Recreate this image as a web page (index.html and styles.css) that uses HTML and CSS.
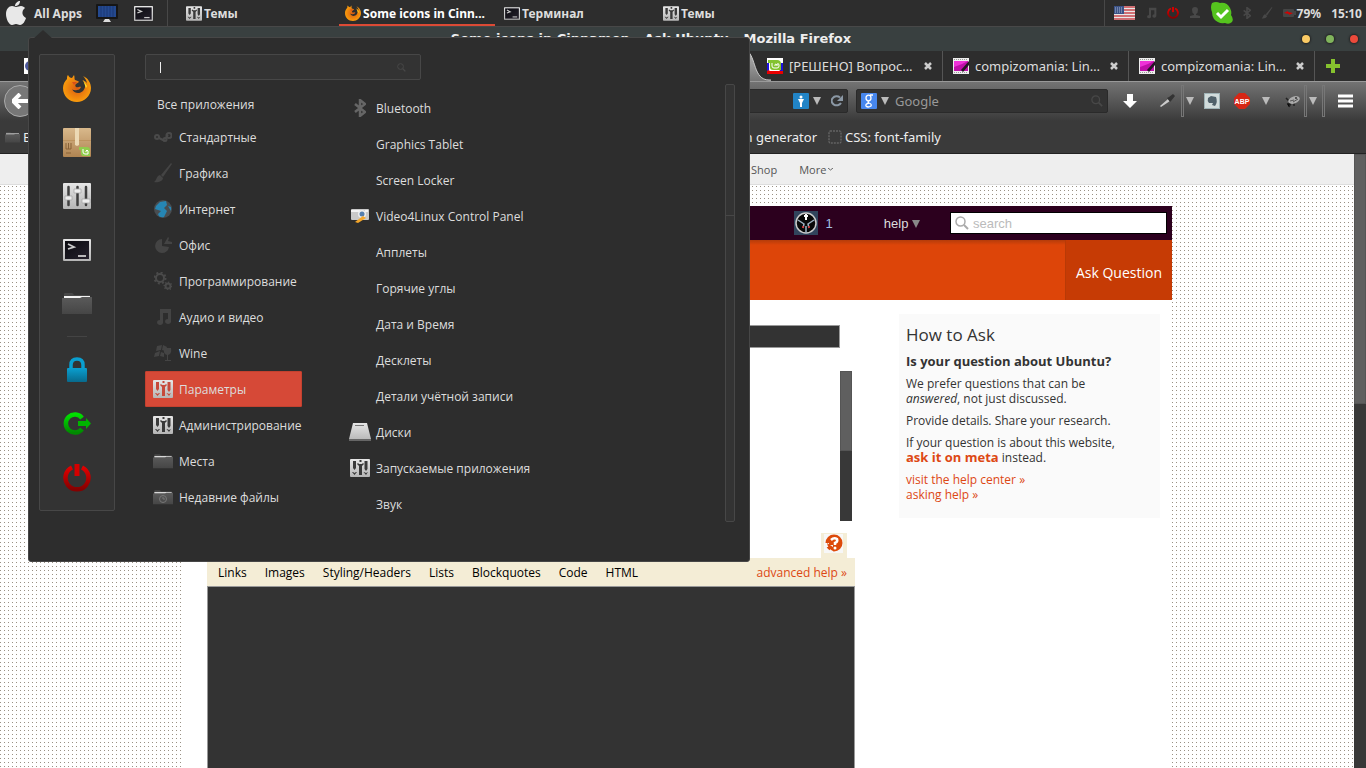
FILE: index.html
```
<!DOCTYPE html>
<html lang="ru">
<head>
<meta charset="UTF-8">
<meta name="viewport" content="width=device-width, initial-scale=1.0">
<title>Some icons in Cinnamon - Ask Ubuntu</title>
<link rel="stylesheet" href="styles.css">
</head>
<body>

<!-- Shared icons -->
<svg class="sprite" aria-hidden="true">
    <defs>
        <linearGradient id="gSilver" x1="0" y1="0" x2="0" y2="1"><stop offset="0" stop-color="#e6e6e6"/><stop offset="1" stop-color="#b5b5b5"/></linearGradient>
        <linearGradient id="gFolder" x1="0" y1="0" x2="0" y2="1"><stop offset="0" stop-color="#5a5a5a"/><stop offset="1" stop-color="#464646"/></linearGradient>
        <linearGradient id="gScreen" x1="0" y1="0" x2="1" y2="1"><stop offset="0" stop-color="#0b0b10"/><stop offset="1" stop-color="#25212c"/></linearGradient>
        <linearGradient id="gRed" x1="0" y1="0" x2="0" y2="1"><stop offset="0" stop-color="#e00000"/><stop offset="1" stop-color="#850000"/></linearGradient>
        <linearGradient id="gGreen" x1="0" y1="0" x2="0" y2="1"><stop offset="0" stop-color="#00e000"/><stop offset="1" stop-color="#008a00"/></linearGradient>
        <linearGradient id="gBlue" x1="0" y1="0" x2="0" y2="1"><stop offset="0" stop-color="#0a9fd0"/><stop offset="1" stop-color="#086a8c"/></linearGradient>
        <linearGradient id="gBox" x1="0" y1="0" x2="0" y2="1"><stop offset="0" stop-color="#d9b98c"/><stop offset="1" stop-color="#b08452"/></linearGradient>
        <linearGradient id="gTab" x1="0" y1="0" x2="0" y2="1"><stop offset="0" stop-color="#b4b4b4"/><stop offset="1" stop-color="#757575"/></linearGradient>
        <radialGradient id="gFox"><stop offset="0" stop-color="#d95b12"/><stop offset="1" stop-color="#f99b0c"/></radialGradient>
    </defs>
    <symbol id="firefox" viewBox="0 0 28 28">
        <path d="M5 1C6 3 7 4 9 4L11 1C12 3 11 5 12 6C14 7 16 7 16 8L13 10C12 11 12 12 13 13C15 14 17 12 18 13C17 15 16 16 14 16C11 17 9 15 9 15C11 20 17 20 20 17C24 12 22 8 19 6C23 7 24 9 24 10C24 6 21 3 20 2C25 4 28 9 28 14C28 22 21 28 14 28C6 28 0 22 0 14C0 10 2 7 4 5C4 3 4 2 5 1Z" fill="url(#gFox)"/>
        <path d="M20 6L24 12L23 14Z" fill="#ffe32a"/>
        <path d="M9 8L14 8L11 11Z" fill="#d8501a"/>
    </symbol>
    <symbol id="mixer" viewBox="0 0 28 26">
        <rect width="28" height="26" rx="1" fill="url(#gSilver)"/>
        <path d="M5.500 4V22M14.500 4V22M23 4V22" stroke="#3f3f3f" stroke-width="2.500" stroke-linecap="round"/>
        <path d="M2 13H9V17H2ZM11 6H18V10H11ZM19 16H27V20H19Z" fill="#eee" stroke="#aaa" stroke-width="0.800"/>
    </symbol>
    <symbol id="mixer-small" viewBox="0 0 20 18">
        <rect width="20" height="18" rx="1" fill="url(#gSilver)"/>
        <path class="slots" d="M3 2H6V9L4.500 11L3 9ZM9 7H12V16H9ZM14.500 2H17.500V10L16 12L14.500 10ZM2 13H3L4.500 14L6 13H7L4.500 16ZM7 5L8 4L9 5H12L13 4L14 5L12 7H9ZM13.500 13H14L16 14L18 13L16 16ZM9.500 1H11.500V3H9.500Z"/>
    </symbol>
    <symbol id="terminal" viewBox="0 0 28 22">
        <rect width="28" height="22" rx="1" fill="url(#gSilver)"/>
        <rect x="2" y="2" width="24" height="18" fill="url(#gScreen)"/>
        <path d="M5 5L11 8L5 10" fill="none" stroke="#ccc" stroke-width="1.800"/>
        <path d="M15 17H23" stroke="#ccc" stroke-width="1.800"/>
    </symbol>
    <symbol id="folder" viewBox="0 0 30 22">
        <path d="M2 1Q2 0 3 0H10Q11 0 12 2H28V8H2Z" fill="#484848"/>
        <path d="M2 3H28V5H2Z" fill="#f4f4f4"/>
        <path d="M0 5H18L20 4H30V21H0Z" fill="url(#gFolder)"/>
    </symbol>
    <symbol id="power" viewBox="0 0 28 28">
        <path d="M9 3.500A11.500 11.500 0 1 0 19 3.500" fill="none" stroke="url(#gRed)" stroke-width="4.500"/>
        <path d="M11.500 0H16.500V12H11.500Z" fill="#d40000"/>
    </symbol>
    <symbol id="note" viewBox="0 0 18 18">
        <path d="M6 1H17V14A3 2.500 0 1 1 14 11V5H9V15A3 2.500 0 1 1 6 12Z" fill="currentColor"/>
    </symbol>
    <symbol id="bluetooth" viewBox="0 0 12 18">
        <path d="M1 5L11 13L6 17V1L11 5L1 13" fill="none" stroke="currentColor" stroke-width="2.500"/>
    </symbol>
    <symbol id="brush" viewBox="0 0 18 20">
        <path d="M17 0L18 1L9 14L7 12ZM6 12L9 15C9 18 4 20 0 19C3 17 2 13 6 12Z" fill="currentColor"/>
    </symbol>
    <symbol id="lens" viewBox="0 0 14 14">
        <circle cx="5.500" cy="5.500" r="4.500" fill="none" stroke="currentColor" stroke-width="1.500"/>
        <path d="M9 9L13 13" stroke="currentColor" stroke-width="2"/>
    </symbol>
    <symbol id="caret" viewBox="0 0 8 8"><path d="M0 0H8L4 8Z" fill="currentColor"/></symbol>
    <symbol id="cross" viewBox="0 0 8 8"><path d="M1 1L7 7M7 1L1 7" stroke="#ccc" stroke-width="2.500"/></symbol>
    <symbol id="mint" viewBox="0 0 16 16">
        <path d="M0 0H16V16H0Z" fill="#e90000"/><path d="M0 0H16V10L12 13H3L0 11Z" fill="#fff"/><path d="M14 5H16V13H13ZM0 5H2V12L0 13Z" fill="#1d13df"/>
        <path d="M1 2H10Q14 2 14 6V12H6Q3 12 3 9V5H1Z" fill="#83c331"/>
        <path d="M5 5V8Q5 10 7 10H10Q12 10 12 8V7Q12 5 10 6V8M10 7Q8 5 8 7V8" fill="none" stroke="#fff"/>
    </symbol>
    <symbol id="film" viewBox="0 0 16 16">
        <path d="M0 0H16V16H0Z" fill="#eee"/><path d="M1 3H15V13H1Z" fill="#ef31d8"/><path d="M1 9L9 6L15 3V13H1Z" fill="#bf0fa9"/>
        <path d="M8 12L16 3V7L10 14Z" fill="#251525"/><path d="M1 1.500H15M1 14.500H15" stroke="#999" stroke-dasharray="1 1"/>
    </symbol>
</svg>

<!-- Desktop panel -->
<header class="panel">
    <button class="all-apps">
        <svg width="20" height="24" viewBox="0 0 20 24"><path d="M10 6C12 6 13 5 15 5C17 5 18 6 19 7C15 10 16 15 20 17C19 20 17 24 14 24C12 24 12 23 10 23C8 23 8 24 6 24C3 24 0 18 0 13C0 8 3 5 6 5C8 5 9 6 10 6ZM9 5C9 2 12 0 14 0C14 3 12 5 9 5Z" fill="#e8e8e8"/></svg>
        All Apps
    </button>
    <button class="launcher" aria-label="Рабочий стол">
        <svg width="22" height="18" viewBox="0 0 22 18"><rect width="22" height="15" rx="1" fill="#161616"/><rect x="2" y="2" width="18" height="11" fill="#24498f"/><path d="M5 2V13M8 2V13M11 2V13M14 2V13M17 2V13" stroke="#1b3975"/><path d="M9 15H13L15 18H7Z" fill="#ddd"/></svg>
    </button>
    <button class="launcher" aria-label="Терминал"><svg width="19" height="15"><use href="#terminal"/></svg></button>
    <nav class="window-list">
        <button class="task"><svg width="16" height="15"><use href="#mixer-small"/></svg><span>Темы</span></button>
        <button class="task active"><svg width="16" height="16"><use href="#firefox"/></svg><span>Some icons in Cinn...</span></button>
        <button class="task"><svg width="16" height="13"><use href="#terminal"/></svg><span>Терминал</span></button>
        <button class="task"><svg width="16" height="15"><use href="#mixer-small"/></svg><span>Темы</span></button>
    </nav>
    <div class="tray">
        <svg width="21" height="14" viewBox="0 0 21 14"><rect width="21" height="14" fill="#e8e8e8"/><path d="M0 1H21M0 4H21M0 7H21M0 10H21M0 13H21" stroke="#c8474c" stroke-width="1.500"/><rect width="10" height="8" fill="#3b5286"/><path d="M1 2H9M1 4H9M1 6H9" stroke="#a9b5cf" stroke-dasharray="1 1"/></svg>
        <svg width="12" height="12" class="dim"><use href="#note"/></svg>
        <svg width="12" height="12"><use href="#power"/></svg>
        <svg width="12" height="12" viewBox="0 0 12 12" class="dim"><path d="M3 3A3 3 0 1 1 9 3Q9 6 7 7V8L11 9V11H1V9L5 8V7Q3 6 3 3Z" fill="currentColor"/></svg>
        <svg width="22" height="22" viewBox="0 0 22 22"><path d="M1 1Q5-1 9 1Q16 0 19 6Q21 10 20 13Q23 17 21 20Q18 23 14 21Q7 22 3 17Q1 14 1 10Q-1 5 1 1Z" fill="#55c31e"/><path d="M6 11L10 15L17 8" fill="none" stroke="#fff" stroke-width="3"/></svg>
        <svg width="8" height="12" class="dim"><use href="#bluetooth"/></svg>
        <svg width="12" height="12" class="dim"><use href="#brush"/></svg>
        <span class="battery"><svg width="13" height="8" viewBox="0 0 13 8"><rect width="11" height="8" rx="1" fill="#454545"/><rect x="11" y="2" width="2" height="4" fill="#454545"/><path d="M1 4L5 2V3L10 4L6 6V5Z" fill="#d40000"/></svg>79%</span>
        <span class="clock">15:10</span>
    </div>
</header>

<!-- Firefox window -->
<div class="titlebar">
    <h1>Some icons in Cinnamon - Ask Ubuntu - Mozilla Firefox</h1>
    <div class="window-buttons">
        <button class="dot yellow" aria-label="Свернуть"></button>
        <button class="dot green" aria-label="Развернуть"></button>
        <button class="dot red" aria-label="Закрыть"></button>
    </div>
</div>

<div class="tabs">
    <svg class="first-favicon" width="16" height="16" viewBox="0 0 16 16"><rect width="16" height="16" fill="#fff"/><circle cx="6" cy="8" r="5" fill="#4d599b"/></svg>
    <svg class="tab-edge" width="24" height="30" viewBox="0 0 24 30"><path d="M0 0C9 5 6 29 22 29H24V30H0Z" fill="url(#gTab)"/><path d="M0 0C9 5 6 29 22 29H24" fill="none" stroke="#ccc" stroke-width="1"/></svg>
    <div class="tab"><svg width="16" height="16"><use href="#mint"/></svg><span>[РЕШЕНО] Вопрос…</span><button aria-label="Закрыть вкладку"><svg width="8" height="8"><use href="#cross"/></svg></button></div>
    <div class="tab"><svg width="16" height="16"><use href="#film"/></svg><span>compizomania: Lin…</span><button aria-label="Закрыть вкладку"><svg width="8" height="8"><use href="#cross"/></svg></button></div>
    <div class="tab"><svg width="16" height="16"><use href="#film"/></svg><span>compizomania: Lin…</span><button aria-label="Закрыть вкладку"><svg width="8" height="8"><use href="#cross"/></svg></button></div>
    <button class="new-tab" aria-label="Новая вкладка"><svg width="14" height="14" viewBox="0 0 14 14"><path d="M7 0V14M0 7H14" stroke="#86c22e" stroke-width="4"/></svg></button>
</div>

<div class="toolbar">
    <button class="back" aria-label="Назад"><svg width="16" height="16" viewBox="0 0 16 16"><path d="M8 1L1 8L8 15M2 8H16" fill="none" stroke="#fff" stroke-width="4"/></svg></button>
    <div class="field url">
        <svg width="16" height="16" viewBox="0 0 16 16"><rect width="16" height="16" rx="1" fill="#2284c6"/><circle cx="8" cy="4" r="1.500" fill="#fff"/><path d="M5 6H11L9 10V14H7V10Z" fill="#fff"/></svg>
        <svg width="8" height="8"><use href="#caret"/></svg>
        <svg width="12" height="12" viewBox="0 0 12 12"><path d="M10 8A5 4.500 0 1 1 9 2.500" fill="none" stroke="#8b98a5" stroke-width="2"/><path d="M12 0V6H6Z" fill="#8b98a5"/></svg>
    </div>
    <div class="field find">
        <svg width="16" height="16" viewBox="0 0 16 16"><rect width="16" height="16" rx="1" fill="#4787ee"/><ellipse cx="7.500" cy="5" rx="2.500" ry="2.800" fill="none" stroke="#fff" stroke-width="1.300"/><path d="M9 2H12M8 8Q6 9 8 10Q11 11 10 13Q7 15 5 13Q4 11 8 10" fill="none" stroke="#fff" stroke-width="1.300"/></svg>
        <svg width="8" height="8"><use href="#caret"/></svg>
        <input type="text" placeholder="Google" aria-label="Google">
        <svg class="dim" width="12" height="12"><use href="#lens"/></svg>
    </div>
    <div class="addons">
        <button aria-label="Загрузки"><svg width="16" height="16" viewBox="0 0 16 16"><path d="M5 1H11V8H15L8 15L1 8H5Z" fill="#fff"/></svg></button>
        <button class="wide" aria-label="Пипетка"><svg width="16" height="16" viewBox="0 0 16 16"><path d="M1 13L9 6L11 8L2 14Z" fill="#ccc"/><path d="M8 5L10 4L14 1L16 3L12 8L11 9Z" fill="#333"/></svg></button>
        <i></i>
        <button aria-label="Меню пипетки"><svg width="8" height="8"><use href="#caret"/></svg></button>
        <button class="evernote" aria-label="Evernote"><svg width="16" height="16" viewBox="0 0 16 16"><rect width="16" height="16" fill="#9fb3b6"/><rect x="1" y="1" width="14" height="14" fill="#d1dcdc"/><path d="M4 5L7 3L12 4Q14 9 11 13L8 12L9 10H5Q3 8 4 5Z" fill="#50616a"/></svg></button>
        <button class="abp" aria-label="Adblock Plus"><svg width="16" height="16" viewBox="0 0 16 16"><path d="M5 0H11L16 5V11L11 16H5L0 11V5Z" fill="#d62615"/><text x="8" y="11" text-anchor="middle">ABP</text></svg></button>
        <button aria-label="Меню Adblock"><svg width="8" height="8"><use href="#caret"/></svg></button>
        <button class="bug" aria-label="Firebug"><svg width="15" height="13" viewBox="0 0 15 13"><path d="M1 3L6 8M2 9L6 8L4 12M9 8V11" stroke="#222" stroke-width="1.500"/><ellipse cx="9" cy="5" rx="6" ry="3.500" transform="rotate(-20 9 5)" fill="#aaa"/><path d="M5 6L9 5M8 7L13 4" stroke="#555"/><circle cx="11" cy="3" r="1" fill="#333"/></svg></button>
        <i></i>
        <button aria-label="Меню Firebug"><svg width="8" height="8"><use href="#caret"/></svg></button>
        <i class="last"></i>
        <button aria-label="Меню"><svg width="17" height="14" viewBox="0 0 17 14"><path d="M1 2H16M1 7H16M1 12H16" stroke="#fff" stroke-width="3"/></svg></button>
    </div>
</div>

<div class="bookmarks">
    <div class="bookmarks-start">
        <a href="#"><svg width="15" height="11"><use href="#folder"/></svg>Blog</a>
        <a href="#">Icon generator</a>
    </div>
    <a href="#"><svg width="14" height="14" viewBox="0 0 14 14"><rect x="1" y="1" width="12" height="12" rx="1" fill="none" stroke="#777" stroke-dasharray="2 1"/></svg>CSS: font-family</a>
</div>

<div class="viewport">
    <div class="page">
        <nav class="site-links">
            <a href="#">Shop</a>
            <a href="#">More<svg width="5" height="3" viewBox="0 0 5 3"><path d="M0 0L2.500 2L5 0" fill="none" stroke="#666"/></svg></a>
        </nav>
        <div class="container">
            <div class="topbar">
                <svg width="24" height="24" viewBox="0 0 24 24"><rect width="24" height="24" fill="#31445c"/><circle cx="12" cy="12" r="10" fill="#090909" stroke="#ccc" stroke-width="1.500"/><path d="M12 3V9M10 5H14" stroke="#fff" stroke-width="2"/><path d="M4 9L10 13L9 17M20 9L14 13L15 17M12 15V22" fill="none" stroke="#9fb2c2" stroke-width="1.500"/><path d="M8 16H10M14 16H16" stroke="#d22" stroke-width="1.500"/></svg>
                <a class="reputation" href="#">1</a>
                <a class="help" href="#">help <svg width="8" height="8"><use href="#caret"/></svg></a>
                <label class="site-search"><svg width="14" height="14"><use href="#lens"/></svg><input type="text" placeholder="search" aria-label="search"></label>
            </div>
            <div class="masthead"><a href="#">Ask Question</a></div>
            <div class="content">
                <main>
                    <input class="title-input" type="text" aria-label="Title">
                    <div class="preview"><div class="thumb"></div></div>
                    <div class="help-tab"><button aria-label="Editing help"><svg width="19" height="19" viewBox="0 0 19 19"><rect width="19" height="19" fill="#f7f7f7"/><circle cx="10" cy="9" r="8.500" fill="#dd4a0a"/><path d="M0 9H5V11H9V19H6V13H2Z" fill="#f7f7f7"/><path d="M3 9L9 13V17Q4 15 3 9Z" fill="#dd4a0a"/><path d="M7 6Q10 3 13 5Q14 8 11 9V11" fill="none" stroke="#fff" stroke-width="2.500"/><circle cx="11" cy="14" r="1.500" fill="#fff"/></svg></button></div>
                    <div class="editor-help">
                        <a href="#">Links</a><a href="#">Images</a><a href="#">Styling/Headers</a><a href="#">Lists</a><a href="#">Blockquotes</a><a href="#">Code</a><a href="#">HTML</a>
                        <a class="advanced" href="#">advanced help »</a>
                    </div>
                    <textarea aria-label="Question"></textarea>
                </main>
                <aside>
                    <h2>How to Ask</h2>
                    <p><b>Is your question about Ubuntu?</b></p>
                    <p>We prefer questions that can be<br><em>answered</em>, not just discussed.</p>
                    <p>Provide details. Share your research.</p>
                    <p>If your question is about this website,<br><a href="#"><b>ask it on meta</b></a> instead.</p>
                    <p><a href="#">visit the help center »</a><br><a href="#">asking help »</a></p>
                </aside>
            </div>
        </div>
    </div>
    <div class="page-scroll"><div class="thumb"></div></div>
</div>

<!-- Cinnamon menu -->
<section class="menu">
    <div class="favorites">
        <button aria-label="Firefox"><svg width="28" height="28"><use href="#firefox"/></svg></button>
        <button aria-label="Менеджер программ"><svg width="28" height="29" viewBox="0 0 28 29"><rect width="28" height="29" rx="1" fill="url(#gBox)"/><path d="M0 12H28V13H0Z" fill="#bd935f"/><path d="M12 0H16V17L14 18L12 17Z" fill="#ecd9b5"/><path d="M3 15V21H8V15M5.500 15V21M3 25H8" fill="none" stroke="#896238"/><path d="M16 19H24Q27 19 27 22V28H20Q18 28 18 25V22H16Z" fill="#90cc4c"/><path d="M20 21V24Q20 26 22 26H25V23Q24 21 23 23V24" fill="none" stroke="#fff"/></svg></button>
        <button aria-label="Параметры системы"><svg width="28" height="26"><use href="#mixer"/></svg></button>
        <button aria-label="Терминал"><svg width="28" height="22"><use href="#terminal"/></svg></button>
        <button aria-label="Файлы"><svg width="30" height="22"><use href="#folder"/></svg></button>
        <hr>
        <button aria-label="Заблокировать"><svg width="20" height="26" viewBox="0 0 20 26"><path d="M4 13V8Q4 2 10 2Q16 2 16 8V13" fill="none" stroke="#0a9fd0" stroke-width="3.500"/><rect y="11" width="20" height="14" rx="1" fill="url(#gBlue)"/></svg></button>
        <button aria-label="Завершить сеанс"><svg width="28" height="24" viewBox="0 0 28 24"><path d="M19 6A9 9 0 1 0 19 17" fill="none" stroke="url(#gGreen)" stroke-width="4.500"/><path d="M15 9H23V6L28 11.500L23 17V14H15Z" fill="#00b400"/></svg></button>
        <button aria-label="Выключить"><svg width="28" height="28"><use href="#power"/></svg></button>
    </div>
    <div class="menu-main">
        <label class="menu-search"><input type="text" aria-label="Поиск"><svg class="dim" width="9" height="9"><use href="#lens"/></svg></label>
        <div class="panes">
            <div class="categories">
                <button class="all">Все приложения</button>
                <button><svg class="line" width="18" height="10" viewBox="0 0 18 10"><circle cx="3" cy="5" r="2"/><circle cx="15" cy="3.500" r="2.500"/><circle cx="11" cy="7.500" r="1.500"/><path d="M5 6L11 9M11 7L14 3"/></svg>Стандартные</button>
                <button><svg width="18" height="20"><use href="#brush"/></svg>Графика</button>
                <button><svg width="18" height="18" viewBox="0 0 18 18"><circle cx="9" cy="9" r="9" fill="#484d51"/><path d="M2 6L6 2L12 1L13 5L10 8L13 11L10 17Q5 18 4 14L7 11L1 9ZM14 6L17 7V11Z" fill="#2686b4"/></svg>Интернет</button>
                <button><svg width="18" height="18" viewBox="0 0 18 18"><path d="M8 3V10L15 11A7 7 0 1 1 8 3ZM10 8L14 1L15 2L14 5L18 6V8Z" fill="currentColor"/></svg>Офис</button>
                <button><svg class="line" width="18" height="18" viewBox="0 0 18 18"><circle cx="6" cy="6" r="4"/><circle cx="6" cy="6" r="5.500" stroke-dasharray="2 2.300"/><circle cx="14" cy="14" r="2.500"/><circle cx="14" cy="14" r="3.500" stroke-dasharray="1 1.700"/></svg>Программирование</button>
                <button><svg width="18" height="18"><use href="#note"/></svg>Аудио и видео</button>
                <button><svg width="18" height="18" viewBox="0 0 18 18"><path d="M3 2L8 1L7 6L2 7ZM9 1L13 3L12 7L8 6ZM1 9L6 7L5 12L0 13ZM7 8L10 9V13L6 12ZM10 4H17Q18 10 14 11V16H17V17H11V16H13V11Q9 10 10 4Z" fill="currentColor"/></svg>Wine</button>
                <button class="selected"><svg width="20" height="18"><use href="#mixer-small"/></svg>Параметры</button>
                <button><svg width="20" height="18"><use href="#mixer-small"/></svg>Администрирование</button>
                <button><svg width="20" height="15"><use href="#folder"/></svg>Места</button>
                <button><svg width="20" height="15" viewBox="0 0 20 15"><use href="#folder" width="20" height="15"/><circle cx="10" cy="9" r="3.500" fill="none" stroke="#777"/><path d="M10 7V9H12" fill="none" stroke="#777"/></svg>Недавние файлы</button>
            </div>
            <ul class="apps">
                <li><button><svg width="12" height="18"><use href="#bluetooth"/></svg></button><span>Bluetooth</span></li>
                <li><button></button><span>Graphics Tablet</span></li>
                <li><button></button><span>Screen Locker</span></li>
                <li><button><svg width="18" height="16" viewBox="0 0 18 16"><rect y="1" width="18" height="11" rx="1" fill="#c9c9c9"/><path d="M0 2H9V4H0ZM14 2H17V4H14Z" fill="#f3f3f3"/><circle cx="11" cy="6" r="4" fill="#eee"/><circle cx="11" cy="6" r="2.500" fill="#557fae"/><path d="M4 14L12 8L15 10L7 15Z" fill="#f4a62a"/></svg></button><span>Video4Linux Control Panel</span></li>
                <li><button></button><span>Апплеты</span></li>
                <li><button></button><span>Горячие углы</span></li>
                <li><button></button><span>Дата и Время</span></li>
                <li><button></button><span>Десклеты</span></li>
                <li><button></button><span>Детали учётной записи</span></li>
                <li><button><svg width="22" height="18" viewBox="0 0 22 18"><path d="M4 0H18L22 16V18H0V16Z" fill="url(#gSilver)"/><path d="M0 17H22" stroke="#666" stroke-width="2"/><path d="M6 2.500H15" stroke="#777"/></svg></button><span>Диски</span></li>
                <li><button><svg width="20" height="18"><use href="#mixer-small"/></svg></button><span>Запускаемые приложения</span></li>
                <li><button></button><span>Звук</span></li>
            </ul>
            <div class="menu-scroll"><div class="thumb"></div></div>
        </div>
    </div>
</section>
</body>
</html>
```
FILE: styles.css
```
* {
    box-sizing: border-box;
}
body {
    margin: 0;
    height: 100vh;
    display: flex;
    flex-direction: column;
    overflow: hidden;
    position: relative;
    background: #2d2d2d;
    color: #ddd;
    font-family: "Open Sans", "Noto Sans", sans-serif;
    font-size: 12px;
}
button {
    display: flex;
    align-items: center;
    padding: 0;
    border: 0;
    background: none;
    color: inherit;
    font: inherit;
}
input {
    min-width: 0;
    padding: 0;
    border: 0;
    outline: 0;
    background: none;
    color: inherit;
    font: inherit;
}
a {
    color: inherit;
    text-decoration: none;
}
svg {
    flex: none;
}
.sprite {
    position: absolute;
    width: 0;
    height: 0;
}
.dim {
    color: #484848;
}
.slots {
    fill: var(--slot, #3a3a3a);
}

/* Panel */
.panel {
    flex: none;
    display: flex;
    height: 27px;
    border-bottom: 1px solid #484848;
    font-family: "Noto Sans", sans-serif;
    font-weight: bold;
}
.all-apps {
    gap: 8px;
    padding: 0 6px;
}
.launcher {
    justify-content: center;
    width: 37px;
}
.window-list {
    flex: 1;
    display: flex;
    gap: 3px;
    margin-left: 5px;
    padding-left: 12px;
    border-left: 1px solid #484848;
}
.task {
    width: 156px;
    gap: 2px;
    padding: 0 6px;
    border-top: 2px solid transparent;
    border-bottom: 2px solid transparent;
}
.task.active {
    border-bottom-color: #dc4a35;
    color: #fff;
}
.task span {
    white-space: nowrap;
}
.tray {
    display: flex;
    align-items: center;
    gap: 10px;
    padding: 0 4px 0 9px;
    border-left: 1px solid #484848;
}
.battery {
    display: flex;
    align-items: center;
    gap: 1px;
}

/* Window frame */
.titlebar {
    flex: none;
    display: flex;
    align-items: center;
    height: 24px;
    background: #394040;
}
.titlebar h1 {
    flex: 1;
    margin: 0;
    color: #eee;
    font-family: "DejaVu Sans", sans-serif;
    font-size: 13px;
    line-height: 20px;
    text-align: center;
}
.window-buttons {
    display: flex;
    gap: 16px;
    padding-right: 8px;
}
.dot {
    width: 8px;
    height: 8px;
    border-radius: 4px;
    box-shadow: 0 0 2px 1px #222;
}
.yellow { background: #fbcb65; }
.green { background: #80b45c; }
.red { background: #ec4a3b; }

.tabs {
    flex: none;
    display: flex;
    align-items: center;
    height: 30px;
    font-family: "Noto Sans", sans-serif;
    font-size: 13px;
}
.first-favicon {
    margin-left: 24px;
}
.tab-edge {
    margin-left: auto;
    margin-right: -14px;
}
.tab {
    display: flex;
    align-items: center;
    gap: 6px;
    width: 186px;
    height: 30px;
    padding: 0 10px;
    border-right: 1px solid #555;
    white-space: nowrap;
}
.tab button {
    margin-left: auto;
}
.new-tab {
    width: 51px;
    padding-left: 11px;
}
.toolbar {
    flex: none;
    display: flex;
    align-items: center;
    height: 40px;
    padding-bottom: 1px;
    border-top: 1px solid #999;
    background: linear-gradient(#737373, #3a3a3a);
    font-family: "Noto Sans", sans-serif;
}
.back {
    justify-content: center;
    width: 32px;
    height: 32px;
    margin-left: 4px;
    border: 1px solid #aaa;
    border-radius: 16px;
    background: #777;
}
.field {
    display: flex;
    align-items: center;
    gap: 4px;
    height: 24px;
    padding: 0 4px;
    border: 1px solid #2a2a2a;
    border-radius: 2px;
    background: #333;
    color: #bbb;
}
.url {
    flex: 1;
    justify-content: flex-end;
    margin-right: 8px;
}
.url svg:last-child {
    margin-left: 6px;
}
.find {
    width: 252px;
}
.find input {
    flex: 1;
    margin-left: 2px;
    font-size: 13px;
}
.find input::placeholder {
    color: #999;
    opacity: 1;
}
.addons {
    display: flex;
    align-items: center;
    align-self: stretch;
    padding: 0 12px 0 14px;
    color: #bbb;
}
.addons .wide {
    margin-left: 21px;
    margin-right: 6px;
}
.addons i {
    width: 3px;
    height: 32px;
    margin-right: 2px;
    border: 1px solid #777;
}
.addons .evernote {
    margin-left: 10px;
}
.addons .abp {
    margin: 0 12px 0 14px;
}
.abp text {
    fill: #fff;
    font: bold 7px "Liberation Sans", sans-serif;
}
.addons .bug {
    margin: 0 4px 0 15px;
}
.addons .last {
    margin: 0 12px 0 5px;
}
.bookmarks {
    flex: none;
    display: flex;
    align-items: center;
    height: 33px;
    border-bottom: 1px solid #222;
    background: #3a3a3a;
    color: #eee;
    font-family: "Noto Sans", sans-serif;
    font-size: 13px;
}
.bookmarks a {
    display: flex;
    align-items: center;
    gap: 3px;
}
.bookmarks-start {
    display: flex;
    justify-content: space-between;
    width: 817px;
    margin-right: 11px;
    padding-left: 5px;
}

/* Page */
.viewport {
    flex: 1;
    display: flex;
    min-height: 0;
}
.page {
    flex: 1;
    display: flex;
    flex-direction: column;
    background:
        linear-gradient(to right, transparent 1px, #fff 1px),
        linear-gradient(#999084 1px, #fff 1px);
    background-size: 4px 4px;
    color: #333;
}
.page-scroll {
    width: 12px;
    background: #383838;
}
.page-scroll .thumb {
    height: 250px;
    border: 1px solid #555;
    background: #5f5f5f;
}
.site-links {
    flex: none;
    display: flex;
    align-items: center;
    gap: 22px;
    height: 31px;
    padding-left: 751px;
    border-bottom: 1px solid #ddd;
    background: #eee;
    color: #555;
    font-size: 11px;
}
.site-links a {
    display: flex;
    align-items: center;
    gap: 2px;
}
.container {
    flex: 1;
    display: flex;
    flex-direction: column;
    width: 990px;
    margin: 21px auto 0;
    background: #fff;
}
.topbar {
    display: flex;
    align-items: center;
    justify-content: flex-end;
    height: 34px;
    padding-right: 5px;
    background: #2c001e;
    color: #ddd;
    font-family: "Liberation Sans", sans-serif;
    font-size: 13px;
}
.reputation {
    margin: 0 51px 0 8px;
    color: #a3c1e4;
}
.help {
    margin-right: 30px;
}
.help svg {
    color: #888;
}
.site-search {
    display: flex;
    align-items: center;
    gap: 4px;
    width: 217px;
    height: 22px;
    padding: 0 4px;
    border: 1px solid #000;
    background: #fff;
    color: #aaa;
}
.site-search input {
    flex: 1;
}
.site-search input::placeholder {
    color: #bbb;
    opacity: 1;
}
.masthead {
    display: flex;
    justify-content: flex-end;
    height: 60px;
    background: linear-gradient(#b53c0a, #dd4509 5px);
    color: #fff;
    font-size: 14px;
}
.masthead a {
    display: flex;
    align-items: center;
    padding: 4px 10px 0;
    border-left: 1px solid #b93a06;
    background: #c63b05;
}
.content {
    flex: 1;
    display: flex;
    align-items: flex-start;
    gap: 44px;
    padding-left: 25px;
}
main {
    align-self: stretch;
    display: flex;
    flex-direction: column;
    width: 648px;
    padding-top: 25px;
}
.title-input {
    width: 633px;
    height: 23px;
    border: 1px solid #999;
    background: #333;
}
.preview {
    align-self: flex-end;
    width: 12px;
    height: 150px;
    margin: 23px 3px 12px 0;
    background: #383838;
}
.preview .thumb {
    height: 80px;
    border: 1px solid #555;
    background: #5f5f5f;
}
.help-tab {
    align-self: flex-end;
    margin-right: 8px;
    padding: 1px 4px 5px 3px;
    background: #f4edd6;
}
.editor-help {
    display: flex;
    align-items: center;
    gap: 18px;
    height: 28px;
    padding: 0 8px 0 11px;
    background: #f4edd6;
    color: #000;
}
.editor-help .advanced {
    margin-left: auto;
}
.advanced, aside a {
    color: #dd4814;
}
textarea {
    flex: 1;
    border: 1px solid #999;
    border-bottom: 0;
    background: #333;
    resize: none;
}
aside {
    width: 261px;
    margin-top: 14px;
    padding: 7px 7px 9px;
    background: #fafafa;
    line-height: 15px;
}
aside h2 {
    margin: 0 0 5px;
    font-size: 17px;
    font-weight: normal;
    line-height: 28px;
}
aside p {
    margin: 0 0 7px;
    white-space: nowrap;
}
aside b {
    font-size: 13px;
}

/* Menu */
.menu {
    position: absolute;
    top: 37px;
    left: 28px;
    display: flex;
    align-items: flex-start;
    gap: 30px;
    width: 722px;
    padding: 16px 14px 39px 10px;
    border: 1px solid #474747;
    border-radius: 3px;
    background: #2d2d2d;
}
.menu::before {
    content: "";
    position: absolute;
    top: -8px;
    left: 4px;
    width: 20px;
    height: 9px;
    background: #2d2d2d;
    clip-path: polygon(50% 0, 100% 100%, 0 100%);
}
.favorites {
    width: 76px;
    padding: 6px 0 5px;
    border: 1px solid #474747;
    border-radius: 2px;
    background: #333;
}
.favorites button {
    justify-content: center;
    width: 100%;
    height: 54px;
}
.favorites hr {
    width: 20px;
    margin: 5px auto 6px;
    border: 0;
    border-top: 1px solid #444;
}
.menu-main {
    flex: 1;
}
.menu-search {
    display: flex;
    align-items: center;
    width: 276px;
    height: 26px;
    padding: 0 14px;
    border: 1px solid #474747;
    border-radius: 2px;
    background: #333;
}
.menu-search input {
    flex: 1;
    height: 11px;
    border-left: 1px solid #eee;
}
.panes {
    display: flex;
    gap: 40px;
    margin-top: 4px;
}
.categories {
    width: 157px;
    padding-top: 5px;
}
.categories button {
    width: 100%;
    height: 36px;
    gap: 5px;
    padding-left: 7px;
    white-space: nowrap;
}
.categories .all {
    height: 30px;
    padding-left: 12px;
}
.categories svg {
    box-sizing: content-box;
    padding: 0 1px;
    color: #444;
}
.categories svg[width="18"] {
    padding: 0 2px;
}
.categories .line {
    fill: none;
    stroke: #4a4a4a;
    stroke-width: 2;
}
.categories .selected {
    padding-left: 6px;
    border: 1px solid #c4412f;
    border-radius: 1px;
    background: #d64937;
    --slot: #c64a3b;
}
.apps {
    flex: 1;
    margin: 0;
    padding: 6px 0 0;
    list-style: none;
}
.apps li {
    display: flex;
    align-items: center;
    gap: 5px;
    height: 36px;
    padding-left: 7px;
}
.apps button {
    justify-content: center;
    width: 22px;
    color: #666;
}
.menu-scroll {
    width: 10px;
    border: 1px solid #474747;
    border-radius: 2px;
    background: #333;
}
.menu-scroll .thumb {
    height: 131px;
    border-bottom: 1px solid #474747;
}
```
